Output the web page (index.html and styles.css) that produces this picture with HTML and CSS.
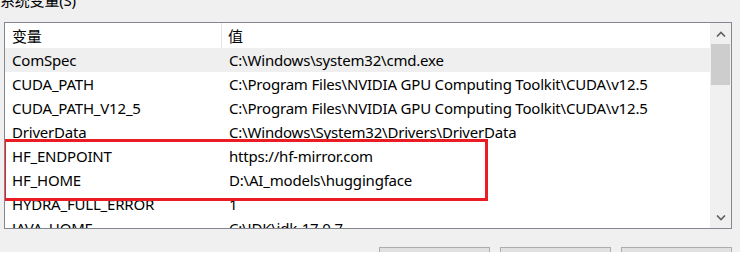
FILE: index.html
```html
<!DOCTYPE html>
<html lang="zh-CN">
<head>
    <meta charset="UTF-8">
    <title>系统变量</title>
    <link rel="stylesheet" href="styles.css">
</head>
<body>
    <div class="ventana">
        <div class="grupo-titulo">系统变量(S)</div>
        <div class="lista">
            <div class="lista-cuerpo">
                <div class="fila cabecera">
                    <div class="col-nombre">变量</div>
                    <div class="col-valor">值</div>
                </div>
                <div class="fila activa">
                    <div class="col-nombre">ComSpec</div>
                    <div class="col-valor">C:\Windows\system32\cmd.exe</div>
                </div>
                <div class="fila">
                    <div class="col-nombre">CUDA_PATH</div>
                    <div class="col-valor">C:\Program Files\NVIDIA GPU Computing Toolkit\CUDA\v12.5</div>
                </div>
                <div class="fila">
                    <div class="col-nombre">CUDA_PATH_V12_5</div>
                    <div class="col-valor">C:\Program Files\NVIDIA GPU Computing Toolkit\CUDA\v12.5</div>
                </div>
                <div class="fila">
                    <div class="col-nombre">DriverData</div>
                    <div class="col-valor">C:\Windows\System32\Drivers\DriverData</div>
                </div>
                <div class="fila">
                    <div class="col-nombre">HF_ENDPOINT</div>
                    <div class="col-valor">https://hf-mirror.com</div>
                </div>
                <div class="fila">
                    <div class="col-nombre">HF_HOME</div>
                    <div class="col-valor">D:\AI_models\huggingface</div>
                </div>
                <div class="fila">
                    <div class="col-nombre">HYDRA_FULL_ERROR</div>
                    <div class="col-valor">1</div>
                </div>
                <div class="fila">
                    <div class="col-nombre">JAVA_HOME</div>
                    <div class="col-valor">C:\JDK\jdk-17.0.7</div>
                </div>
                <div class="marca-roja"></div>
            </div>
            <div class="barra-scroll">
                <div class="flecha">
                    <svg width="10" height="6" viewBox="0 0 10 6"><path d="M1 5.5 L5 1.5 L9 5.5" fill="none" stroke="#606060" stroke-width="1.6"/></svg>
                </div>
                <div class="pulgar"></div>
                <div class="pista"></div>
                <div class="flecha">
                    <svg width="10" height="6" viewBox="0 0 10 6"><path d="M1 0.5 L5 4.5 L9 0.5" fill="none" stroke="#606060" stroke-width="1.6"/></svg>
                </div>
            </div>
        </div>
        <div class="botones">
            <div class="boton"></div>
            <div class="boton"></div>
            <div class="boton"></div>
        </div>
    </div>
</body>
</html>
```

FILE: styles.css
```css
:root {
    --color-fondo: #f0f0f0;
    --color-borde: #828790;
    --color-fila: #efefef;
    --color-pulgar: #cdcdcd;
    --color-boton: #e1e1e1;
    --color-boton-borde: #adadad;
    --color-rojo: #ea1c24;
}
body {
    margin: 0;
    background-color: #ffffff;
    font-family: 'Noto Sans', 'Noto Sans CJK SC', sans-serif;
    font-size: 15px;
    letter-spacing: -0.2px;
    color: #000000;
}
.ventana {
    width: 740px;
    height: 252px;
    background-color: var(--color-fondo);
    overflow: hidden;
}
.grupo-titulo {
    height: 32px;
    margin-top: -10px;
    line-height: 20px;
}
.lista {
    margin-left: 4px;
    width: 726px;
    height: 205px;
    border: 1px solid var(--color-borde);
    background-color: #ffffff;
    display: flex;
    overflow: hidden;
}
.lista-cuerpo {
    position: relative;
    width: 705px;
}
.fila {
    display: flex;
    height: 24px;
    align-items: center;
    white-space: nowrap;
}
.fila.cabecera {
    height: 25px;
}
.fila.activa {
    background-color: var(--color-fila);
}
.col-nombre {
    width: 217px;
    padding-left: 7px;
    box-sizing: border-box;
    align-self: stretch;
    display: flex;
    align-items: center;
}
.cabecera .col-nombre {
    border-right: 1px solid #e5e5e5;
}
.col-valor {
    padding-left: 7px;
}
.cabecera .col-valor {
    padding-left: 6px;
}
.marca-roja {
    position: absolute;
    left: -2px;
    top: 116px;
    width: 479px;
    height: 56px;
    border: 3px solid var(--color-rojo);
}
.barra-scroll {
    width: 21px;
    background-color: var(--color-fondo);
    display: flex;
    flex-direction: column;
    align-items: center;
}
.flecha {
    height: 21px;
    width: 21px;
    display: flex;
    align-items: center;
    justify-content: center;
}
.pulgar {
    width: 19px;
    height: 41px;
    background-color: var(--color-pulgar);
}
.pista {
    flex-grow: 1;
}
.botones {
    display: flex;
    justify-content: flex-end;
    gap: 10px;
    margin-top: 18px;
    padding-right: 8px;
}
.boton {
    width: 109px;
    height: 20px;
    background-color: var(--color-boton);
    border: 1px solid var(--color-boton-borde);
}
```
